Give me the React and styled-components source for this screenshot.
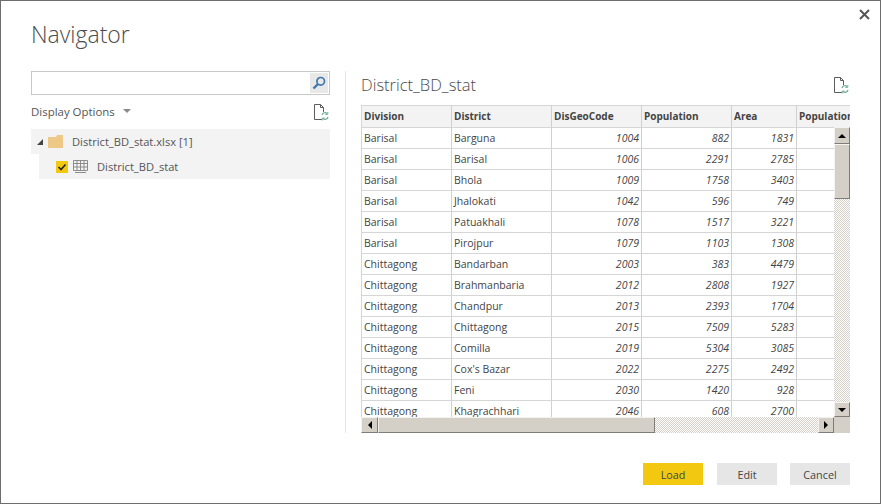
import React from 'react'
import styled, { createGlobalStyle } from 'styled-components'

const GlobalStyle = createGlobalStyle`
    html, body {
        margin: 0;
        padding: 0;
        background: #fff;
    }
    * {
        box-sizing: border-box;
    }
`

const FONT = `'Open Sans', 'Noto Sans', sans-serif`

const Dialog = styled.div`
    position: relative;
    width: 881px;
    height: 504px;
    overflow: hidden;
    padding: 0 30px 18px 30px;
    display: flex;
    flex-direction: column;
    background: #fff;
    border: 1px solid #6d6d6d;
    font-family: ${FONT};
    color: #444;
`
const CloseButton = styled.button`
    position: absolute;
    top: 8px;
    right: 10px;
    width: 11px;
    height: 11px;
    padding: 0;
    border: 0;
    display: flex;
    background: none;
`
const Title = styled.h1`
    margin: 17px 0 1px;
    height: 52px;
    font-size: 23px;
    line-height: 32px;
    font-weight: 300;
    color: #4c4c4c;
`
const Body = styled.div`
    display: flex;
    height: 362px;
`
const LeftPane = styled.div`
    width: 299px;
    display: flex;
    flex-direction: column;
`
const SearchBox = styled.div`
    height: 24px;
    border: 1px solid #c8c8c8;
    display: flex;
    justify-content: flex-end;
    padding: 1px;
`
const SearchButton = styled.div`
    width: 18px;
    height: 20px;
    background: #e8e8e8;
    display: flex;
    align-items: center;
    justify-content: center;
`
const OptionsBar = styled.div`
    height: 34px;
    display: flex;
    align-items: center;
    justify-content: space-between;
    padding-right: 1px;
`
const OptionsLabel = styled.div`
    display: flex;
    align-items: center;
    gap: 8px;
    margin-bottom: 2px;
    font-size: 11.45px;
    color: #555;
`
const Caret = styled.span`
    width: 0;
    height: 0;
    border-left: 4px solid transparent;
    border-right: 4px solid transparent;
    border-top: 4px solid #8a8a8a;
`
const TreeRow = styled.div`
    height: 25px;
    margin-left: ${p => (p.$child ? '8px' : '0')};
    padding-left: ${p => (p.$child ? '17px' : '6px')};
    display: flex;
    align-items: center;
    background: #f3f3f3;
    font-size: 11.15px;
    color: #555;
`
const Twisty = styled.span`
    width: 0;
    height: 0;
    margin-right: 5px;
    border-left: 6px solid transparent;
    border-bottom: 6px solid #444;
`
const FolderIcon = styled.svg`
    margin-right: 9px;
`
const CheckBox = styled.span`
    width: 12px;
    height: 12px;
    margin-right: 5px;
    background: #f2c811;
    display: flex;
    align-items: center;
    justify-content: center;
`
const GridIcon = styled.svg`
    margin-right: 9px;
`
const Divider = styled.div`
    width: 1px;
    margin: 0 15px 0 15px;
    background: #e4e4e4;
`
const RightPane = styled.div`
    width: 489px;
    display: flex;
    flex-direction: column;
`
const PreviewHead = styled.div`
    height: 34px;
    display: flex;
    justify-content: space-between;
    align-items: flex-start;
    padding-right: 1px;
`
const PreviewTitle = styled.div`
    font-size: 16.5px;
    line-height: 27px;
    font-weight: 300;
    color: #4c4c4c;
`
const RefreshSlot = styled.div`
    padding-top: 6px;
    display: flex;
`
const TableFrame = styled.div`
    position: relative;
    height: 328px;
    overflow: hidden;
`
const Row = styled.div`
    display: flex;
    height: 21px;
    width: 600px;
`
const HeadRow = styled(Row)`
    height: 23px;
`
const Cell = styled.div`
    width: ${p => p.$w}px;
    flex: none;
    height: 100%;
    padding: 0 2px 0 2px;
    border-right: 1px solid #d0d0d0;
    border-bottom: 1px solid #d6d6d6;
    font-size: 10.5px;
    line-height: 20px;
    white-space: nowrap;
    overflow: hidden;
    color: #444;
    text-align: ${p => (p.$num ? 'right' : 'left')};
    font-style: ${p => (p.$num ? 'italic' : 'normal')};
    ${p => p.$first && 'border-left: 1px solid #d6d6d6;'}
`
const HeadCell = styled(Cell)`
    background: #f3f3f3;
    border-top: 1px solid #d6d6d6;
    font-size: 10px;
    font-weight: 700;
    line-height: 20px;
    text-align: left;
`
const VScroll = styled.div`
    position: absolute;
    top: 22px;
    right: 0;
    width: 16px;
    height: 290px;
    display: flex;
    flex-direction: column;
`
const HScroll = styled.div`
    position: absolute;
    left: 0;
    bottom: 0;
    width: 489px;
    height: 16px;
    display: flex;
`
const ArrowButton = styled.div`
    flex: none;
    width: ${p => p.$w || 16}px;
    height: ${p => p.$h || 16}px;
    background: #d4d0c8;
    border-right: 1px solid #7f7d78;
    border-bottom: 1px solid #7f7d78;
    border-top: 1px solid #f4f3f0;
    border-left: 1px solid #f4f3f0;
    display: flex;
    align-items: center;
    justify-content: center;
`
const Track = styled.div`
    flex: 1;
    background-color: #fff;
    background-image: conic-gradient(#d4d0c8 25%, #fff 0 50%, #d4d0c8 0 75%, #fff 0);
    background-size: 2px 2px;
`
const Corner = styled.div`
    flex: none;
    width: 16px;
    height: 16px;
    background: #d4d0c8;
`
const Triangle = styled.span`
    width: 0;
    height: 0;
    ${p => p.$dir === 'up' && 'border-left: 4px solid transparent; border-right: 4px solid transparent; border-bottom: 4px solid #000;'}
    ${p => p.$dir === 'down' && 'border-left: 4px solid transparent; border-right: 4px solid transparent; border-top: 4px solid #000;'}
    ${p => p.$dir === 'left' && 'border-top: 4px solid transparent; border-bottom: 4px solid transparent; border-right: 4px solid #000;'}
    ${p => p.$dir === 'right' && 'border-top: 4px solid transparent; border-bottom: 4px solid transparent; border-left: 4px solid #000;'}
`
const Footer = styled.div`
    margin-top: 30px;
    display: flex;
    justify-content: flex-end;
    gap: 13px;
`
const Button = styled.button`
    width: 60px;
    height: 22px;
    padding: 0;
    border: 0;
    font-family: ${FONT};
    font-size: 10.8px;
    color: #444;
    background: ${p => (p.$primary ? '#f2c811' : '#e6e6e6')};
    margin-right: ${p => (p.$primary ? '1px' : '0')};
`

const RefreshIcon = () => (
    <svg width="15" height="17" viewBox="0 0 15 17" fill="none">
        <path d="M8 15.500H.5V.5h6l3 3V8" stroke="#5c5c5c" />
        <path d="M6.500.5v3h3" stroke="#5c5c5c" />
        <path d="M8 11a3 3 0 0 1 5-1.500M14 13a3 3 0 0 1-5 1.500" stroke="#6fae96" strokeWidth="1.2" />
        <path d="M13.800 8v2.400h-2.400M8.200 16.500v-2.400h2.400" stroke="#6fae96" />
    </svg>
)

const COLS = [91, 100, 90, 90, 65, 165]
const HEADERS = ['Division', 'District', 'DisGeoCode', 'Population', 'Area', 'Population']
const ROWS = [
    ['Barisal', 'Barguna', 1004, 882, 1831],
    ['Barisal', 'Barisal', 1006, 2291, 2785],
    ['Barisal', 'Bhola', 1009, 1758, 3403],
    ['Barisal', 'Jhalokati', 1042, 596, 749],
    ['Barisal', 'Patuakhali', 1078, 1517, 3221],
    ['Barisal', 'Pirojpur', 1079, 1103, 1308],
    ['Chittagong', 'Bandarban', 2003, 383, 4479],
    ['Chittagong', 'Brahmanbaria', 2012, 2808, 1927],
    ['Chittagong', 'Chandpur', 2013, 2393, 1704],
    ['Chittagong', 'Chittagong', 2015, 7509, 5283],
    ['Chittagong', 'Comilla', 2019, 5304, 3085],
    ['Chittagong', "Cox's Bazar", 2022, 2275, 2492],
    ['Chittagong', 'Feni', 2030, 1420, 928],
    ['Chittagong', 'Khagrachhari', 2046, 608, 2700],
]

function App() {
    return (
        <Dialog>
            <GlobalStyle />
            <CloseButton>
                <svg width="11" height="11" viewBox="0 0 11 11">
                    <path d="M1 1l9 9M10 1l-9 9" stroke="#555" strokeWidth="2" />
                </svg>
            </CloseButton>
            <Title>Navigator</Title>
            <Body>
                <LeftPane>
                    <SearchBox>
                        <SearchButton>
                            <svg width="14" height="14" viewBox="0 0 14 14" fill="none">
                                <circle cx="8.700" cy="5.300" r="3.800" stroke="#3f78ad" strokeWidth="1.700" />
                                <path d="M6 8L1.500 12.500" stroke="#3f78ad" strokeWidth="2.400" />
                            </svg>
                        </SearchButton>
                    </SearchBox>
                    <OptionsBar>
                        <OptionsLabel>Display Options <Caret /></OptionsLabel>
                        <RefreshIcon />
                    </OptionsBar>
                    <TreeRow>
                        <Twisty />
                        <FolderIcon width="15" height="13" viewBox="0 0 15 13">
                            <path d="M0 2h8l1-2h6v13H0z" fill="#edc887" />
                        </FolderIcon>
                        District_BD_stat.xlsx [1]
                    </TreeRow>
                    <TreeRow $child>
                        <CheckBox>
                            <svg width="10" height="10" viewBox="0 0 10 10" fill="none">
                                <path d="M1.500 5l2.500 2.500 4.500-5" stroke="#222" strokeWidth="1.600" />
                            </svg>
                        </CheckBox>
                        <GridIcon width="15" height="13" viewBox="0 0 15 13" fill="none" stroke="#8c8c8c">
                            <path d="M.5.5h14v10H.5zM.5 3.500h14M.5 7h14M4 .5v10M7.500.5v10M11 .5v10M2 12.500h11" />
                        </GridIcon>
                        District_BD_stat
                    </TreeRow>
                </LeftPane>
                <Divider />
                <RightPane>
                    <PreviewHead>
                        <PreviewTitle>District_BD_stat</PreviewTitle>
                        <RefreshSlot><RefreshIcon /></RefreshSlot>
                    </PreviewHead>
                    <TableFrame>
                        <HeadRow>
                            {HEADERS.map((h, i) => (
                                <HeadCell key={i} $w={COLS[i]} $first={i === 0}>{h}</HeadCell>
                            ))}
                        </HeadRow>
                        {ROWS.map((r, ri) => (
                            <Row key={ri}>
                                {r.map((v, i) => (
                                    <Cell key={i} $w={COLS[i]} $first={i === 0} $num={i > 1}>{v}</Cell>
                                ))}
                                <Cell $w={COLS[5]} />
                            </Row>
                        ))}
                        <VScroll>
                            <ArrowButton $h={17}><Triangle $dir="up" /></ArrowButton>
                            <ArrowButton $h={55} />
                            <Track />
                            <ArrowButton $h={15}><Triangle $dir="down" /></ArrowButton>
                        </VScroll>
                        <HScroll>
                            <ArrowButton $w={17}><Triangle $dir="left" /></ArrowButton>
                            <ArrowButton $w={277} />
                            <Track />
                            <ArrowButton><Triangle $dir="right" /></ArrowButton>
                            <Corner />
                        </HScroll>
                    </TableFrame>
                </RightPane>
            </Body>
            <Footer>
                <Button $primary>Load</Button>
                <Button>Edit</Button>
                <Button>Cancel</Button>
            </Footer>
        </Dialog>
    )
}

export default App
